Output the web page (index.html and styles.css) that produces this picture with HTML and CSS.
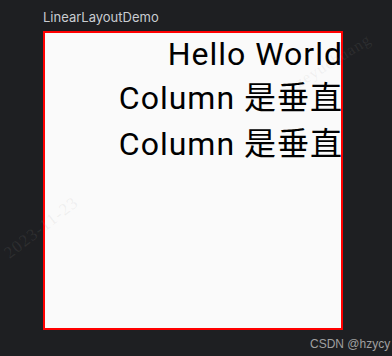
FILE: index.html
```html
<!DOCTYPE html>
<html lang="en">
<head>
  <meta charset="UTF-8" />
  <meta name="viewport" content="width=device-width, initial-scale=1.0"/>
  <title>LinearLayoutDemo</title>
  <link rel="stylesheet" href="styles.css">
</head>
<body>
  <div class="preview">
    <div class="preview-title">LinearLayoutDemo</div>
    <div class="device">
      <div class="line first">Hello World</div>
      <div class="line">Column 是垂直</div>
      <div class="line">Column 是垂直</div>
    </div>
  </div>
  <!-- faint blog watermarks -->
  <div class="mark mark-name">zeyuchuang</div>
  <div class="mark mark-date">2023-11-23</div>
  <div class="credit">CSDN @hzycy</div>
</body>
</html>
```

FILE: styles.css
```css
body {
  margin: 0;
  padding: 0;
  width: 392px;
  height: 356px;
  background-color: #1e1f22;
  font-family: Roboto, "Noto Sans CJK SC", sans-serif;
  overflow: hidden;
  position: relative;
}
.preview {
  padding: 8px 0 0 43px;
}
.preview-title {
  font-family: Inter, "Noto Sans", sans-serif;
  font-size: 13px;
  line-height: 18px;
  color: #c9ccd1;
  height: 23px;
}
.device {
  width: 296px;
  height: 295px;
  border: 2px solid #ff0000;
  background: #fafafa;
  overflow: hidden;
}
.line {
  text-align: right;
  font-size: 32px;
  line-height: 46px;
  letter-spacing: 1px;
  color: #000;
  white-space: nowrap;
  margin-right: -2px;
}
.line.first {
  line-height: 42px;
}
.mark {
  position: absolute;
  font-family: "Liberation Serif", serif;
  font-size: 16px;
  letter-spacing: 1px;
  color: rgba(160, 160, 160, 0.12);
  white-space: nowrap;
}
.mark-name {
  left: 290px;
  top: 52px;
  transform: rotate(-32deg);
}
.mark-date {
  left: -3px;
  top: 218px;
  transform: rotate(-38deg);
  font-size: 17px;
}
.credit {
  position: absolute;
  left: 310px;
  bottom: 5px;
  font-family: "Liberation Sans", sans-serif;
  font-size: 12px;
  color: #a0a0a0;
}
```
